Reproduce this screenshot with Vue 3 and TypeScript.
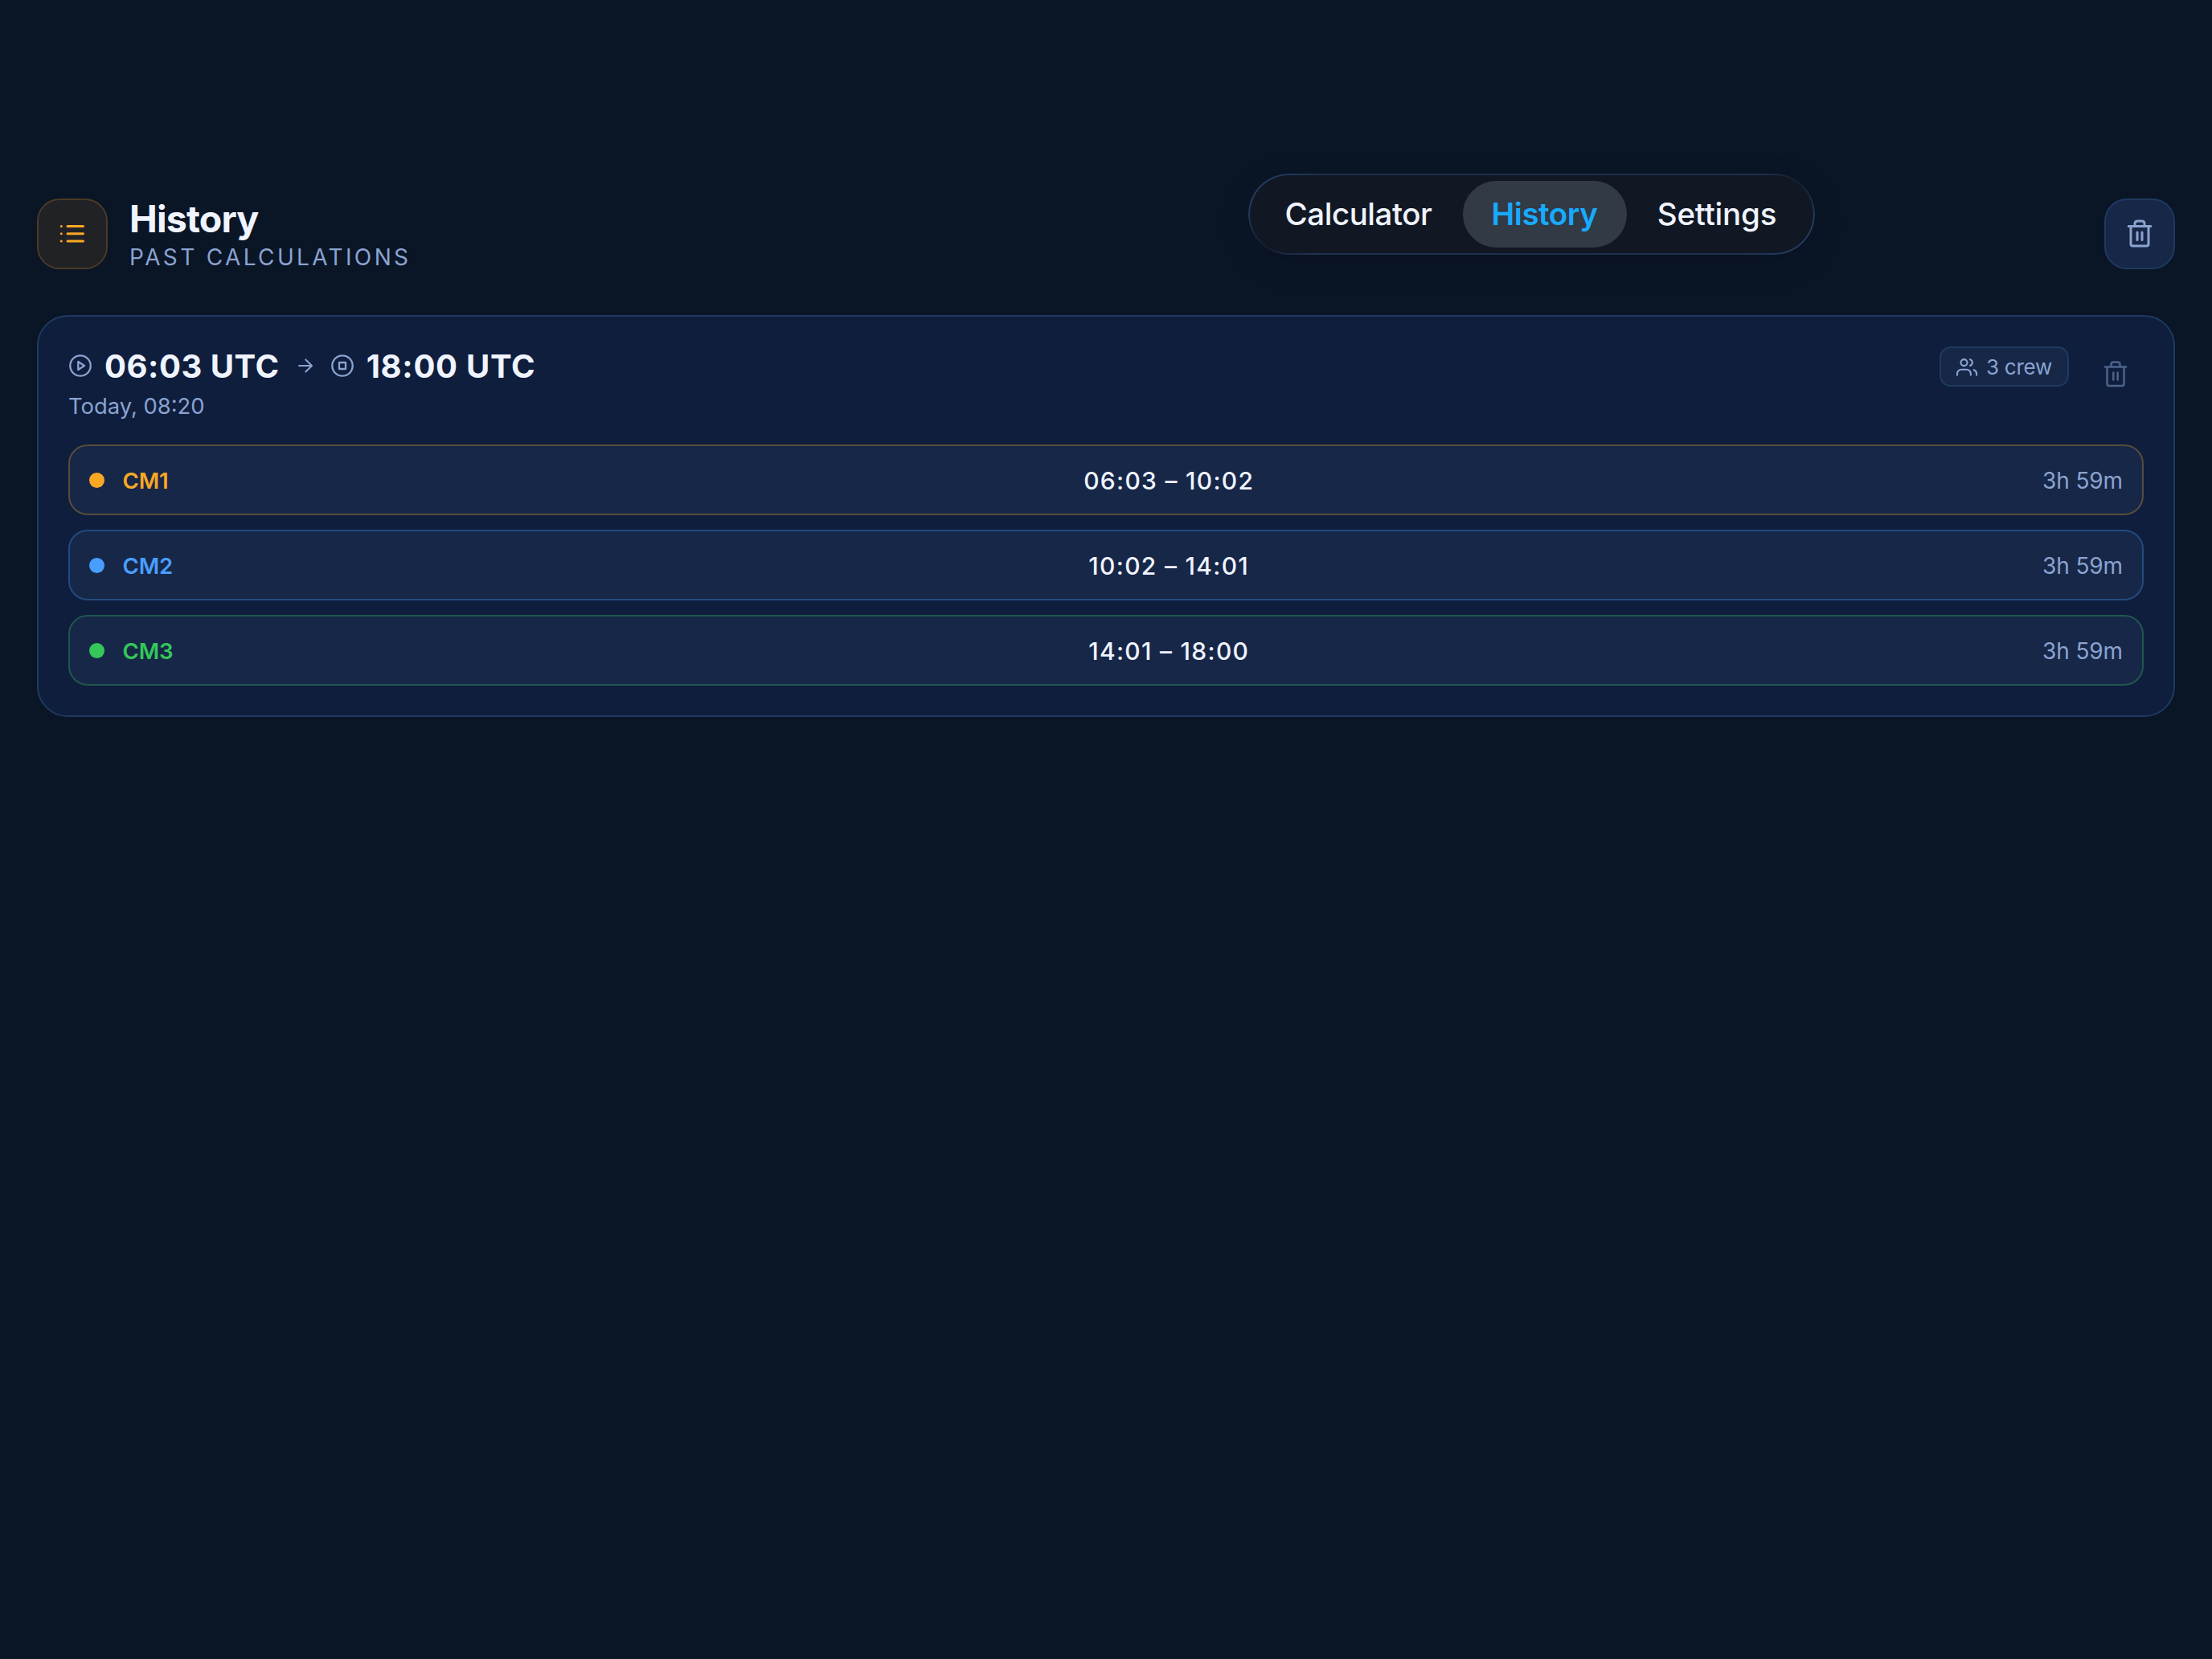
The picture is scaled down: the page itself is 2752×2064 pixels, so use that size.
<script setup lang="ts">
interface Shift {
  name: string
  range: string
  duration: string
  tone: 'amber' | 'blue' | 'green'
}

const tabs = ['Calculator', 'History', 'Settings']
const activeTab = 'History'

const shifts: Shift[] = [
  { name: 'CM1', range: '06:03 – 10:02', duration: '3h 59m', tone: 'amber' },
  { name: 'CM2', range: '10:02 – 14:01', duration: '3h 59m', tone: 'blue' },
  { name: 'CM3', range: '14:01 – 18:00', duration: '3h 59m', tone: 'green' },
]
</script>

<template>
  <div class="screen">
    <nav class="tabs">
      <div v-for="tab in tabs" :key="tab" class="tab" :class="[tab.toLowerCase(), { active: tab === activeTab }]">
        <span>{{ tab }}</span>
      </div>
    </nav>

    <header class="header">
      <div class="badge">
        <svg width="36" height="36" viewBox="0 0 36 36" fill="none" stroke="currentColor" stroke-width="3" stroke-linecap="round">
          <path d="M12 8.5H31.5M12 17.8H31.5M12 27H31.5" />
          <path d="M4.3 8.5H4.31M4.3 17.8H4.31M4.3 27H4.31" />
        </svg>
      </div>
      <div class="titles">
        <h1>History</h1>
        <p>PAST CALCULATIONS</p>
      </div>
      <button class="clear" type="button">
        <svg width="36" height="36" viewBox="0 0.6 36 36" fill="none" stroke="currentColor" stroke-width="3" stroke-linecap="round" stroke-linejoin="round">
          <path d="M4.2 9H31.8M7 9V31Q7 33.5 9.5 33.5H26.5Q29 33.5 29 31V9M12 9V6Q12 2.5 15.5 2.5H20.5Q24 2.5 24 6V9M15 16.5V26M21 16.5V26" />
        </svg>
      </button>
    </header>

    <main class="card">
      <div class="card-head">
        <div class="when">
          <div class="span">
            <svg class="play" width="28" height="28" viewBox="0 0 28 28" fill="none" stroke="currentColor" stroke-width="2.3" stroke-linejoin="round">
              <circle cx="14" cy="14" r="12.7" />
              <path d="M11.3 9V19L19 14Z" />
            </svg>
            <strong class="start">06:03 UTC</strong>
            <svg class="arrow" width="18" height="18" viewBox="0 0 18 18" fill="none" stroke="currentColor" stroke-width="2" stroke-linecap="round" stroke-linejoin="round">
              <path d="M1 9H17M9.3 1.5L17 9L9.3 16.5" />
            </svg>
            <svg width="28" height="28" viewBox="0 0 28 28" fill="none" stroke="currentColor" stroke-width="2.3" stroke-linejoin="round">
              <circle cx="14" cy="14" r="12.7" />
              <path d="M10 10H18V18H10Z" />
            </svg>
            <strong class="end">18:00 UTC</strong>
          </div>
          <p class="date">Today, 08:20</p>
        </div>
        <div class="crew">
          <svg width="29" height="28" viewBox="0 0 29 28" fill="none" stroke="currentColor" stroke-width="2.1" stroke-linecap="round" stroke-linejoin="round">
            <circle cx="11.5" cy="9.1" r="4" />
            <path d="M3 24.7V23a5.2 5.2 0 0 1 5.2-5.2h6.4a5.2 5.2 0 0 1 5.2 5.2v1.7" />
            <path d="M19 5.2a4.1 4.1 0 0 1 0 7.8M27.1 24.7V23a5.2 5.2 0 0 0-3.3-4.8" />
          </svg>
          <span>3 crew</span>
        </div>
        <svg class="remove" width="32" height="36" viewBox="0 -0.5 32 36" fill="none" stroke="currentColor" stroke-width="2.5" stroke-linecap="round" stroke-linejoin="round">
          <path d="M3 9H29M5.5 9V30Q5.5 32.5 8 32.5H24Q26.5 32.5 26.5 30V9M10.5 9V6Q10.5 3 13.5 3H18.5Q21.5 3 21.5 6V9M13.3 16V25M18.7 16V25" />
        </svg>
      </div>

      <ul class="shifts">
        <li v-for="shift in shifts" :key="shift.name" class="shift" :class="shift.tone">
          <i class="dot"></i>
          <span class="name">{{ shift.name }}</span>
          <span class="range">{{ shift.range }}</span>
          <span class="duration">{{ shift.duration }}</span>
        </li>
      </ul>
    </main>
  </div>
</template>

<style>
body {
  margin: 0;
  background: #0a1526;
}
</style>

<style scoped>
.screen {
  position: relative;
  box-sizing: border-box;
  width: 2752px;
  height: 2064px;
  padding: 247px 46px 0;
  background: #0a1526;
  font-family: Inter, "Liberation Sans", sans-serif;
  color: #f0f4ff;
  overflow: hidden;
}

svg {
  display: block;
  flex: none;
}

h1,
p,
ul {
  margin: 0;
  padding: 0;
}

/* Floating tab bar */
.tabs {
  position: absolute;
  left: 1552.5px;
  top: 216px;
  display: flex;
  box-sizing: border-box;
  width: 705px;
  height: 101px;
  padding: 8.5px 8px;
  border-radius: 51px;
  background: #111823;
  box-shadow: 0 10px 40px rgba(0, 0, 0, 0.1);
}

.tabs::before {
  content: "";
  position: absolute;
  inset: 0;
  padding: 2px;
  border-radius: inherit;
  background:
    radial-gradient(circle at 16px 100%, #151f30 10px, transparent 62px),
    radial-gradient(circle at calc(100% - 16px) 0, #151f30 10px, transparent 62px),
    linear-gradient(90deg, #263e64 0%, #1e2f50 14%, #1e2f50 86%, #263e64 100%);
  mask: linear-gradient(#000 0 0) content-box exclude, linear-gradient(#000 0 0);
}

.tab {
  display: flex;
  align-items: center;
  justify-content: center;
  height: 83px;
  border-radius: 42px;
  font-size: 38.5px;
  font-weight: 500;
  letter-spacing: -0.45px;
  white-space: nowrap;
}

.calculator {
  width: 259px;
}

.history {
  width: 204px;
}

.settings {
  width: 225px;
  letter-spacing: -0.2px;
}

.tab.active {
  background: #323a46;
  color: #17abff;
  font-weight: 600;
}

.header {
  display: flex;
  height: 88px;
}

.badge,
.clear {
  display: flex;
  align-items: center;
  justify-content: center;
  box-sizing: border-box;
  width: 88px;
  height: 87.5px;
  padding: 0;
  border: 2px solid #4a3a26;
  border-radius: 28px;
  background: #212226;
  color: #f9a825;
}

.clear {
  margin-left: auto;
  border-color: #1e3a5f;
  background: #172748;
  color: #8ba3d0;
}

.titles {
  margin-left: 27px;
}

h1 {
  height: 50px;
  font-size: 46.5px;
  line-height: 50px;
  font-weight: 700;
  letter-spacing: -0.8px;
}

.titles p {
  margin-top: 6px;
  font-size: 28px;
  line-height: 34px;
  letter-spacing: 3.35px;
  color: #8ba3d0;
}

.card {
  box-sizing: border-box;
  height: 500px;
  margin-top: 57px;
  padding: 37px;
  border: 2px solid #1e3a5f;
  border-radius: 38px;
  background: #0f1e3d;
}

.card-head {
  display: flex;
  align-items: flex-start;
  height: 122px;
}

.when {
  flex: 1;
  color: #8ba3d0;
}

.span {
  display: flex;
  align-items: center;
  height: 48px;
}

.play {
  margin-left: 1px;
}

strong {
  margin-left: 15.5px;
  font-size: 40px;
  font-weight: 700;
  letter-spacing: 0.7px;
  color: #f0f4ff;
}

.start {
  margin-left: 16px;
  letter-spacing: 0.53px;
}

.arrow {
  margin: 0 23px 0 23.5px;
}

.date {
  margin-top: 9px;
  font-size: 27.4px;
  line-height: 34px;
}

.crew {
  display: flex;
  align-items: center;
  box-sizing: border-box;
  width: 161px;
  height: 50px;
  padding-left: 17px;
  border: 2px solid #1e3a5f;
  border-radius: 14px;
  background: #172748;
  color: #8ba3d0;
  font-size: 26px;
  letter-spacing: -0.25px;
  white-space: nowrap;
}

.crew span {
  margin-left: 10px;
}

.remove {
  margin: 16px 19px 0 42px;
  color: #4e638a;
}

.shifts {
  display: flex;
  flex-direction: column;
  gap: 18px;
  list-style: none;
}

.shift {
  display: flex;
  align-items: center;
  box-sizing: border-box;
  height: 88px;
  padding: 0 24px 0 23.5px;
  border: 2px solid var(--edge);
  border-radius: 24px;
  background: #172748;
}

.amber {
  --tone: #f9a825;
  --edge: #594c3b;
}

.blue {
  --tone: #4a9eff;
  --edge: #234b7e;
}

.green {
  --tone: #34c759;
  --edge: #20574e;
}

.dot {
  width: 19px;
  height: 19px;
  border-radius: 50%;
  background: var(--tone);
}

.name {
  width: 215px;
  margin-left: 23px;
  padding-top: 1px;
  font-size: 27.6px;
  font-weight: 600;
  letter-spacing: -0.15px;
  color: var(--tone);
}

.range {
  flex: 1;
  padding-top: 1px;
  text-align: center;
  font-size: 30px;
  font-weight: 500;
  letter-spacing: 1.3px;
}

.duration {
  padding-top: 1px;
  font-size: 28px;
  letter-spacing: -0.1px;
  color: #8ba3d0;
}
</style>
